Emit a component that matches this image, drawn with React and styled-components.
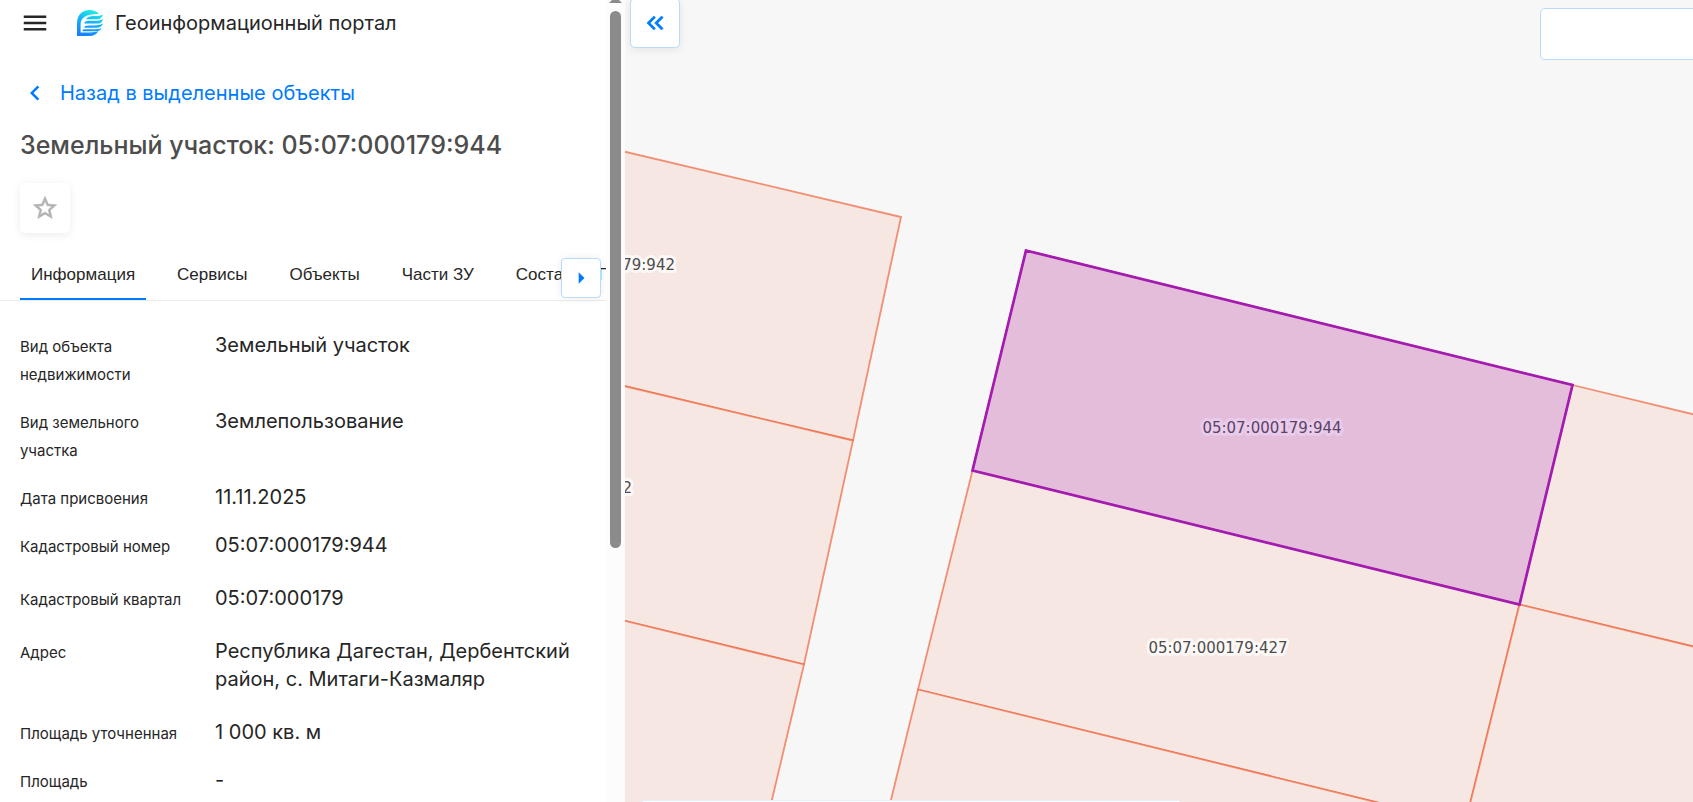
import React from 'react';
import styled, { createGlobalStyle } from 'styled-components';
import {
  MdMenu,
  MdChevronLeft,
  MdStarBorder,
  MdArrowRight,
  MdKeyboardDoubleArrowLeft,
} from 'react-icons/md';

const GlobalStyle = createGlobalStyle`
  *, *::before, *::after {
    box-sizing: border-box;
  }

  body {
    margin: 0;
    font-family: Inter, sans-serif;
    color: #262626;
    background-color: #fff;
  }

  button {
    font: inherit;
    color: inherit;
    cursor: pointer;
  }
`;

const Page = styled.div`
  display: flex;
  height: 100vh;
  overflow: hidden;
`;

const Sidebar = styled.aside`
  display: flex;
  flex: 0 0 625px;
  min-width: 0;
  max-width: 100%;
`;

const SidebarContent = styled.div`
  flex: 1;
  min-width: 0;
  overflow: hidden;
`;

const ScrollTrack = styled.div`
  display: flex;
  flex-direction: column;
  align-items: center;
  width: 19px;
  background-color: #fcfcfc;
`;

const ScrollArrow = styled.div`
  width: 13px;
  height: 3px;
  background-color: #8b8b8b;
  clip-path: polygon(3px 0, 10px 0, 100% 100%, 0 100%);
`;

const ScrollThumb = styled.div`
  width: 11px;
  height: 67%;
  margin-top: 8px;
  border-radius: 6px;
  background-color: #8b8b8b;
`;

const Header = styled.header`
  display: flex;
  align-items: center;
  height: 46px;
  padding: 0 20px;
`;

const MenuButton = styled.button`
  display: flex;
  padding: 0;
  border: none;
  background: none;
  font-size: 30px;
`;

const Brand = styled.a`
  display: flex;
  align-items: center;
  gap: 12px;
  margin-left: 27px;
  color: inherit;
  font-size: 20px;
  line-height: 28px;
  text-decoration: none;
`;

const BackLink = styled.a`
  display: flex;
  align-items: center;
  gap: 10px;
  margin-top: 32px;
  padding: 0 20px;
  color: #007bff;
  font-size: 20px;
  line-height: 28px;
  text-decoration: none;
`;

const Title = styled.h1`
  margin: 23px 20px 0;
  color: #4d4d4d;
  font-size: 25px;
  font-weight: 500;
  line-height: 28px;
`;

const FavoriteButton = styled.button`
  display: flex;
  align-items: center;
  justify-content: center;
  width: 50px;
  height: 50px;
  margin: 24px 20px 0;
  padding: 0;
  border: none;
  border-radius: 5px;
  background-color: #fff;
  box-shadow: 0 2px 8px rgba(0, 0, 0, 0.08);
  color: #b3b3b3;
  font-size: 28px;

  path:not([fill='none']) {
    stroke-width: 0.5px;
  }

  path[fill='none'] {
    stroke: none;
  }

  svg {
    stroke: currentColor;
  }
`;

const TabBar = styled.div`
  position: relative;
  margin-top: 19px;
  border-bottom: 1px solid #ebebeb;
`;

const Tabs = styled.div`
  display: flex;
  gap: 20px;
  padding-left: 20px;
  overflow: hidden;
`;

const Tab = styled.button`
  flex: none;
  height: 48px;
  padding: 0 11px;
  border: none;
  border-bottom: 2px solid ${({ $active }) => ($active ? '#007bff' : 'transparent')};
  background: none;
  font-family: 'Liberation Sans', Arial, sans-serif;
  font-size: 17px;
  white-space: nowrap;
`;

const TabsNext = styled.button`
  position: absolute;
  right: 5px;
  bottom: 2px;
  display: flex;
  align-items: center;
  justify-content: center;
  width: 40px;
  height: 40px;
  padding: 0;
  border: 1px solid #b8dbff;
  border-radius: 4px;
  background-color: #fff;
  box-shadow: 0 0 8px rgba(0, 0, 0, 0.08);
  color: #007bff;
  font-size: 28px;
`;

const Details = styled.dl`
  display: flex;
  flex-direction: column;
  gap: 20px;
  margin: 0;
  padding: 30px 20px;
`;

const Row = styled.div`
  display: grid;
  grid-template-columns: 175px 1fr;
  column-gap: 20px;
  align-items: baseline;
  padding-bottom: ${({ $copyable }) => ($copyable ? '5px' : '0')};
  line-height: 28px;
`;

const Label = styled.dt`
  margin-bottom: -2px;
  font-size: 15px;
`;

const Value = styled.dd`
  margin: 0;
  font-size: 20px;
`;

const MapArea = styled.main`
  position: relative;
  flex: 1;
  min-width: 0;
  overflow: hidden;
  background-color: #f7f7f7;
`;

const MapCanvas = styled.svg`
  display: block;
  width: 100%;
  height: 100%;
`;

const Parcel = styled.polygon`
  fill: #f6e7e2;
  stroke: #f0653f;
  stroke-opacity: 0.7;
  stroke-width: 1.8;
`;

const SelectedParcel = styled.polygon`
  fill: rgba(156, 26, 191, 0.2);
  stroke: #a31bb0;
  stroke-width: 2.7;
`;

const ParcelLabel = styled.text`
  fill: #4d4d4d;
  stroke: rgba(255, 255, 255, 0.7);
  stroke-width: 6px;
  stroke-linejoin: round;
  paint-order: stroke;
  font-family: 'DejaVu Sans', sans-serif;
  font-size: 15px;
`;

const CollapseButton = styled.button`
  position: absolute;
  top: -2px;
  left: 5px;
  display: flex;
  align-items: center;
  justify-content: center;
  width: 50px;
  height: 50px;
  padding: 0;
  border: 1px solid #b8dbff;
  border-radius: 5px;
  background-color: #fff;
  box-shadow: 0 2px 8px rgba(0, 0, 0, 0.08);
  color: #007bff;
  font-size: 28px;

  path:not([fill='none']) {
    stroke-width: 0.5px;
  }

  path[fill='none'] {
    stroke: none;
  }

  svg {
    stroke: currentColor;
  }
`;

const SearchInput = styled.input`
  position: absolute;
  top: 8px;
  right: -20px;
  width: 173px;
  height: 52px;
  padding: 0 16px;
  border: 1px solid #b8dbff;
  border-radius: 5px;
  background-color: #fff;
  font-size: 20px;
`;

const BottomPanel = styled.div`
  position: absolute;
  bottom: 0;
  left: 17px;
  width: 538px;
  height: 2px;
  border-top: 1px solid #e3efff;
  border-radius: 2px 2px 0 0;
  background-color: #fff;
`;

const tabs = ['Информация', 'Сервисы', 'Объекты', 'Части ЗУ', 'Состав ЕЗП'];

const details = [
  { label: 'Вид объекта недвижимости', value: 'Земельный участок' },
  { label: 'Вид земельного участка', value: 'Землепользование' },
  { label: 'Дата присвоения', value: '11.11.2025' },
  { label: 'Кадастровый номер', value: '05:07:000179:944', copyable: true },
  { label: 'Кадастровый квартал', value: '05:07:000179', copyable: true },
  {
    label: 'Адрес',
    value: 'Республика Дагестан, Дербентский район, с. Митаги-Казмаляр',
    copyable: true,
  },
  { label: 'Площадь уточненная', value: '1 000 кв. м' },
  { label: 'Площадь', value: '-' },
];

const parcels = [
  '-20,147 276,217 228,440.5 -20,381.5',
  '-20,381.5 228,440.5 179,664.5 -20,616',
  '-20,616 179,664.5 113,943 -20,910',
  '401,250.5 947.5,385 894.5,604.5 347.5,470.5',
  '347.5,470.5 894.5,604.5 840,824 293,689.5',
  '293,689.5 840,824 786,1044 239,910',
  '947.5,385 1495,518 1442,737 894.5,604.5',
  '894.5,604.5 1442,737 1388,957 840,824',
];

const Logo = () => (
  <svg width="26" height="26" viewBox="0 0 26 26" aria-hidden="true">
    <defs>
      <linearGradient id="logoFill" x1="18" y1="0" x2="9" y2="26" gradientUnits="userSpaceOnUse">
        <stop offset="0" stopColor="#21f3dc" />
        <stop offset="0.45" stopColor="#16b4fb" />
        <stop offset="1" stopColor="#1780ff" />
      </linearGradient>
    </defs>
    <g fill="url(#logoFill)">
      <path d="M0 26V13C0 5 5.500 0 12.500 0c3.800 0 7 1.200 9.500 3.700L17 4.200C9.500 4.500 3.600 7.500 3.600 14.500v7.900H13c3.500 0 6-.3 8.500-1.400C19.500 24.500 16.500 26 12.500 26z" />
      <path d="M11.500 6.900c2.300-1.100 4.500-1 7-1 3 0 5-.3 7.500-1.200-1 3.300-3 4.500-6.500 4.500H9c.6-1 1.500-1.800 2.500-2.300z" />
      <path d="M9 11.300c2.500-.7 5.500-.5 8-.5 3.500 0 6-.4 9-1.900-.8 3.500-3.200 4.700-6.500 4.700H7.200c.2-.9.800-1.900 1.800-2.300z" />
      <path d="M9 15.700c2.500-.4 5-.3 7.500-.3 3.500 0 6.500-.5 9.300-1.900-1 3.300-3.400 4.300-6.500 4.300H7.200c.2-.9.800-1.800 1.800-2.100z" />
      <path d="M6 19.600c4-.4 6.500-.2 10-.3 3 0 6-.3 8.500-1.400-1 2.600-3.500 3.400-6.500 3.400H5.500c0-.7.100-1.200.5-1.700z" />
    </g>
  </svg>
);

const CadastralMap = () => (
  <MapCanvas aria-label="Карта земельных участков">
    {parcels.map((points) => (
      <Parcel key={points} points={points} />
    ))}
    <ParcelLabel x="50" y="270" textAnchor="end">05:07:000179:942</ParcelLabel>
    <ParcelLabel x="7" y="493" textAnchor="end">2</ParcelLabel>
    <ParcelLabel x="647" y="433" textAnchor="middle">05:07:000179:944</ParcelLabel>
    <ParcelLabel x="593" y="653" textAnchor="middle">05:07:000179:427</ParcelLabel>
    <SelectedParcel points="401,250.5 947.5,385 894.5,604.5 347.5,470.5" />
  </MapCanvas>
);

const App = () => {
  return (
    <Page>
      <GlobalStyle />
      <Sidebar>
        <SidebarContent>
          <Header>
            <MenuButton aria-label="Меню">
              <MdMenu />
            </MenuButton>
            <Brand href="#">
              <Logo />
              Геоинформационный портал
            </Brand>
          </Header>
          <BackLink href="#">
            <MdChevronLeft size={30} />
            Назад в выделенные объекты
          </BackLink>
          <Title>Земельный участок: 05:07:000179:944</Title>
          <FavoriteButton aria-label="В избранное">
            <MdStarBorder />
          </FavoriteButton>
          <TabBar>
            <Tabs role="tablist">
              {tabs.map((tab, index) => (
                <Tab key={tab} role="tab" aria-selected={index === 0} $active={index === 0}>
                  {tab}
                </Tab>
              ))}
            </Tabs>
            <TabsNext aria-label="Следующие вкладки">
              <MdArrowRight />
            </TabsNext>
          </TabBar>
          <Details>
            {details.map(({ label, value, copyable }) => (
              <Row key={label} $copyable={copyable}>
                <Label>{label}</Label>
                <Value>{value}</Value>
              </Row>
            ))}
          </Details>
        </SidebarContent>
        <ScrollTrack>
          <ScrollArrow />
          <ScrollThumb />
        </ScrollTrack>
      </Sidebar>
      <MapArea>
        <CadastralMap />
        <CollapseButton aria-label="Свернуть панель">
          <MdKeyboardDoubleArrowLeft />
        </CollapseButton>
        <SearchInput type="text" aria-label="Поиск" />
        <BottomPanel />
      </MapArea>
    </Page>
  );
};

export default App;
